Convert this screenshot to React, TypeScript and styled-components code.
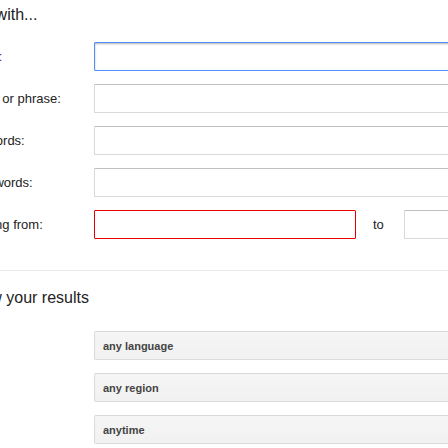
import React from "react";
import styled, { createGlobalStyle, css } from "styled-components";

const Global = createGlobalStyle`
  html, body {
    margin: 0;
    padding: 0;
    background: #ffffff;
    overflow: hidden;
  }
  body {
    font-family: "Liberation Sans", Arial, sans-serif;
    color: #222222;
  }
`;

const Page = styled.div`
  width: 900px;
  margin-left: -88px;
`;

const Heading = styled.h3<{ $top: number; $bottom: number }>`
  margin: 0;
  padding-top: ${(p) => p.$top}px;
  margin-bottom: ${(p) => p.$bottom}px;
  font-size: 16px;
  font-weight: normal;
  line-height: 19px;
  color: #222222;
  white-space: nowrap;
`;

const Rows = styled.div`
  display: flex;
  flex-direction: column;
  gap: 13px;
`;

const Row = styled.div`
  display: flex;
  align-items: center;
  height: 29px;
`;

const Label = styled.label<{ $accent?: boolean }>`
  flex: 0 0 182px;
  font-size: 13px;
  white-space: nowrap;
  color: ${(p) => (p.$accent ? "#74108f" : "#222222")};
`;

type Variant = "focus" | "error" | "plain";

const Input = styled.div<{ $variant: Variant; $width?: number }>`
  box-sizing: border-box;
  height: 29px;
  width: ${(p) => (p.$width ? `${p.$width}px` : "620px")};
  flex: 0 0 auto;
  border: 1px solid #d9d9d9;
  border-top-color: #c0c0c0;
  border-radius: 1px;
  background: #ffffff;
  ${(p) =>
    p.$variant === "focus" &&
    css`
      border-color: #4d90fe;
      box-shadow: inset 0 1px 2px rgba(0, 0, 0, 0.3);
    `}
  ${(p) =>
    p.$variant === "error" &&
    css`
      border-color: #e80000;
    `}
`;

const To = styled.span`
  font-size: 13px;
  color: #222222;
  padding: 0 20px 0 17px;
`;

const Divider = styled.div`
  height: 1px;
  background: #ebebeb;
  margin-top: 31px;
`;

const Select = styled.div`
  box-sizing: border-box;
  height: 29px;
  width: 620px;
  margin-left: 182px;
  display: flex;
  align-items: center;
  padding-left: 8px;
  border: 1px solid rgba(0, 0, 0, 0.1);
  border-radius: 2px;
  background: linear-gradient(#f5f5f5, #f1f1f1);
  color: #444444;
  font-size: 11px;
  font-weight: bold;
`;

const fields: { label: string; variant: Variant; accent?: boolean }[] = [
  { label: "all these words:", variant: "focus", accent: true },
  { label: "this exact word or phrase:", variant: "plain" },
  { label: "any of these words:", variant: "plain" },
  { label: "none of these words:", variant: "plain" },
];

export default function App() {
  return (
    <>
      <Global />
      <Page>
        <Heading $top={5} $bottom={18}>
          Find pages with...
        </Heading>
        <Rows>
          {fields.map((f) => (
            <Row key={f.label}>
              <Label $accent={f.accent}>{f.label}</Label>
              <Input $variant={f.variant} />
            </Row>
          ))}
          <Row>
            <Label>numbers ranging from:</Label>
            <Input $variant="error" $width={262} />
            <To>to</To>
            <Input $variant="plain" $width={262} />
          </Row>
        </Rows>
        <Divider />
        <Heading $top={17} $bottom={24}>
          Then narrow your results
        </Heading>
        <Rows>
          <Select>any language</Select>
          <Select>any region</Select>
          <Select>anytime</Select>
        </Rows>
      </Page>
    </>
  );
}
